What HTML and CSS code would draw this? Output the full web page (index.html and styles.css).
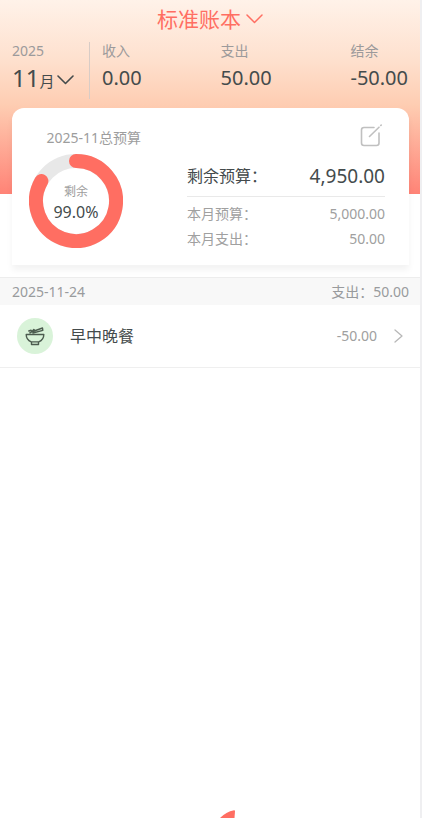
FILE: index.html
```html
<!DOCTYPE html>
<html lang="zh-CN">
<head>
<meta charset="utf-8">
<meta name="viewport" content="width=device-width, initial-scale=1">
<title>标准账本</title>
<link rel="stylesheet" href="styles.css">
</head>
<body>
<div class="app">
  <header class="hero">
    <h1 class="title">
      <button class="plain book" type="button">标准账本
        <svg class="book-arrow" width="17" height="10" viewBox="0 0 17 10" aria-hidden="true"><path d="M1 1l7.500 7.500L16 1"/></svg>
      </button>
    </h1>
    <div class="summary">
      <div class="period">
        <span class="label">2025</span>
        <button class="plain month" type="button"><span class="month-number">11</span><span class="month-unit">月</span><svg class="month-arrow" width="17" height="10" viewBox="0 0 17 10" aria-hidden="true"><path d="M1 1l7.500 7.500L16 1"/></svg></button>
      </div>
      <dl class="totals">
        <div><dt class="label">收入</dt><dd>0.00</dd></div>
        <div><dt class="label">支出</dt><dd>50.00</dd></div>
        <div><dt class="label">结余</dt><dd>-50.00</dd></div>
      </dl>
    </div>
  </header>

  <main>
    <section class="card">
      <div class="budget">
        <h2 class="budget-title">2025-11总预算</h2>
        <div class="ring">
          <svg width="94" height="94" viewBox="0 0 94 94" aria-hidden="true">
            <circle class="ring-track" cx="47" cy="47" r="40"/>
            <path class="ring-value" d="M47 7A40 40 0 1 1 12.400 27"/>
          </svg>
          <div class="ring-text"><span class="ring-label">剩余</span><span class="ring-percent">99.0%</span></div>
        </div>
      </div>
      <div class="details">
        <button class="plain edit" type="button" aria-label="编辑预算">
          <svg width="23" height="23" viewBox="0 0 23 23" aria-hidden="true"><path d="M14 3.500H4Q1.500 3.500 1.500 6v13Q1.500 21.500 4 21.500h12.500Q19 21.500 19 19V9M9.500 12.500L19 3.200M20.800 1.500l.4-.4"/></svg>
        </button>
        <dl class="lines">
          <div class="line line-main"><dt>剩余预算：</dt><dd>4,950.00</dd></div>
          <div class="line"><dt>本月预算：</dt><dd>5,000.00</dd></div>
          <div class="line"><dt>本月支出：</dt><dd>50.00</dd></div>
        </dl>
      </div>
    </section>

    <section class="day">
      <h2 class="day-head"><span>2025-11-24</span><span>支出：50.00</span></h2>
      <a class="entry" href="#entry">
        <span class="entry-icon">
          <svg width="20" height="20" viewBox="0 0 20 20" aria-hidden="true">
            <path d="M1.200 8.500h17.600c0 4-2.500 6.300-5 7.400H6.200c-2.500-1.100-5-3.400-5-7.400zM6.500 15.900v2.600h7v-2.600"/>
            <path d="M5 6.500L17.500 2M8 7l9.800-2.600M17.500 2l.3 2.400M3.800 5l2.200-.8 1 1.200 1.800-2 1.200 1.400M5 7l2-1.600"/>
          </svg>
        </span>
        <span class="entry-name">早中晚餐</span>
        <span class="entry-amount">-50.00</span>
        <svg class="entry-arrow" width="9" height="14" viewBox="0 0 9 14" aria-hidden="true"><path d="M1 1l7 6-7 6"/></svg>
      </a>
    </section>
  </main>

  <svg class="add-mark" width="16" height="8" viewBox="0 0 16 8" aria-hidden="true"><path d="M0 8Q6 2 14 0.300Q15 0.200 15 1L14.500 8z"/></svg>
</div>
</body>
</html>
```
FILE: styles.css
```css
* {
  box-sizing: border-box;
}

body {
  margin: 0;
  background: #fff;
  color: #444b4c;
  font-family: "Noto Sans", "Noto Sans CJK SC", sans-serif;
  font-size: 14px;
  line-height: 20px;
}

h1, h2, dl, dd {
  margin: 0;
  font-weight: 400;
}

svg {
  display: block;
  fill: none;
  stroke-linecap: round;
  stroke-linejoin: round;
}

.plain {
  padding: 0;
  border: 0;
  background: none;
  color: inherit;
  font: inherit;
  cursor: pointer;
}

.app {
  display: flex;
  flex-direction: column;
  min-height: 100vh;
  border-right: 2px solid #efeff1;
}

.hero {
  padding: 4px 12px 95px;
  background: linear-gradient(#fff2e9 0, #fee1cf 30%, #fecdb2 54%, #ff8376 100%);
}

.title {
  display: flex;
  justify-content: center;
  font-size: 21px;
  line-height: 30px;
}

.book {
  display: flex;
  align-items: center;
  gap: 5px;
  color: #ff6e62;
}

.book-arrow {
  stroke: #ff6e62;
  stroke-width: 1.5;
}

.summary {
  display: flex;
  margin-top: 8px;
}

.period {
  width: 78px;
  border-right: 1px solid #d8ccc6;
}

.label {
  display: block;
  color: #9c9a9b;
  line-height: 18px;
}

.month {
  display: flex;
  align-items: baseline;
  line-height: 36px;
}

.month-number {
  font-size: 24px;
}

.month-unit {
  font-size: 15px;
}

.month-arrow {
  align-self: center;
  margin-left: 3px;
  stroke: #444b4c;
  stroke-width: 1.6;
}

.totals {
  display: flex;
  flex: 1;
  justify-content: space-between;
  padding-left: 12px;
}

.totals dd {
  font-size: 20px;
  line-height: 36px;
}

.card {
  display: flex;
  gap: 28px;
  margin: -86px 11px 0 12px;
  padding: 16px 24px 14px 0;
  border-radius: 12px 12px 0 0;
  background: #fff;
  box-shadow: 0 5px 6px rgba(0, 0, 0, 0.05);
}

.budget {
  display: flex;
  flex-direction: column;
  align-items: flex-end;
  width: 147px;
}

.budget-title {
  padding-right: 18px;
  color: #9d9d9d;
  font-size: 14px;
  line-height: 28px;
}

.ring {
  display: grid;
  align-self: flex-start;
  margin: 2px 0 0 17px;
  place-items: center;
}

.ring > * {
  grid-area: 1 / 1;
}

.ring-track, .ring-value {
  stroke-width: 14;
}

.ring-track {
  stroke: #e8e8e8;
}

.ring-value {
  stroke: #ff6e62;
}

.ring-text {
  display: flex;
  flex-direction: column;
  align-items: center;
  padding-top: 2px;
}

.ring-label {
  color: #9d9d9d;
  font-size: 12px;
}

.ring-percent {
  font-size: 16px;
}

.details {
  flex: 1;
}

.edit {
  display: block;
  margin: 0 2px 0 auto;
}

.edit svg {
  stroke: #c0c0c0;
  stroke-width: 1.6;
}

.line {
  display: flex;
  justify-content: space-between;
  color: #a0a0a0;
  line-height: 25px;
}

.line-main {
  margin: 13px 0 4px;
  padding-bottom: 4px;
  border-bottom: 1px solid #e9e9e9;
  color: #444b4c;
  font-size: 16px;
  line-height: 32px;
}

.line-main dd {
  font-size: 19px;
}

.day {
  margin-top: 12px;
}

.day-head {
  display: flex;
  justify-content: space-between;
  padding: 0 11px 0 12px;
  border-top: 1px solid #ededed;
  background: #f8f8f8;
  color: #999b9d;
  font-size: 14px;
  line-height: 27px;
}

.entry {
  display: flex;
  align-items: center;
  padding: 13px 17px;
  border-bottom: 1px solid #efefef;
  color: #444b4c;
  text-decoration: none;
}

.entry-icon {
  display: grid;
  width: 36px;
  height: 36px;
  border-radius: 50%;
  background: #d9f3d9;
  place-items: center;
}

.entry-icon svg {
  stroke: #4c5c4f;
  stroke-width: 1.4;
}

.entry-name {
  margin-left: 17px;
  font-size: 16px;
}

.entry-amount {
  margin-left: auto;
  color: #a0a0a0;
}

.entry-arrow {
  margin-left: 17px;
  stroke: #b8b8b8;
  stroke-width: 1.3;
}

.add-mark {
  margin: auto auto 0;
  transform: translateX(18px);
}

.add-mark path {
  fill: #ff6e62;
}
```
